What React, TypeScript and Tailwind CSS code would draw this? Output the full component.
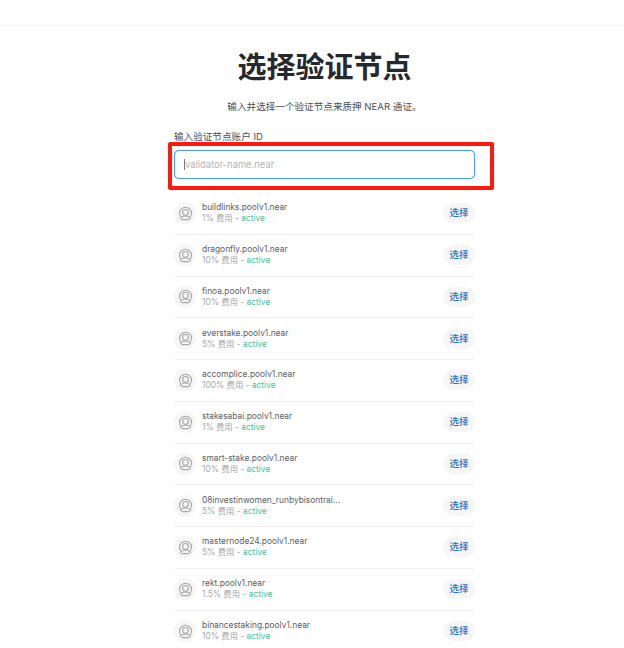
import { useEffect, useRef } from "react";

const validators = [
  { name: "buildlinks.poolv1.near", fee: "1%" },
  { name: "dragonfly.poolv1.near", fee: "10%" },
  { name: "finoa.poolv1.near", fee: "10%" },
  { name: "everstake.poolv1.near", fee: "5%" },
  { name: "accomplice.poolv1.near", fee: "100%" },
  { name: "stakesabai.poolv1.near", fee: "1%" },
  { name: "smart-stake.poolv1.near", fee: "10%" },
  { name: "08investinwomen_runbybisontrai...", fee: "5%" },
  { name: "masternode24.poolv1.near", fee: "5%" },
  { name: "rekt.poolv1.near", fee: "1.5%" },
  { name: "binancestaking.poolv1.near", fee: "10%" },
];

function AvatarIcon() {
  return (
    <div className="flex h-[22px] w-[22px] shrink-0 items-center justify-center rounded-full bg-[#f6f6f6]">
      <svg width="15" height="15" viewBox="0 0 15 15" fill="none" stroke="#a6a6a6" strokeWidth="1.1" strokeLinecap="round">
        <path d="M3 11.2A6 6 0 1 1 12 11.2" />
        <circle cx="7.5" cy="6.4" r="2.9" />
        <path d="M2.4 12.6c1.2-1.8 3-2.6 5.1-2.6s3.9.8 5.1 2.6" />
        <path d="M4 13.6h7" />
      </svg>
    </div>
  );
}

function ValidatorRow({ name, fee, last }: { name: string; fee: string; last: boolean }) {
  return (
    <div className={`flex h-[41.75px] items-center gap-[6px] ${last ? "" : "border-b border-[#f2f2f2]"}`}>
      <AvatarIcon />
      <div className="min-w-0 flex-1">
        <div className="truncate text-[8.4px] leading-[11px] text-[#5b6066]">{name}</div>
        <div className="text-[8.4px] leading-[11px] text-[#a8a8a8]">
          {fee} 费用 - <span className="text-[#4cc196]">active</span>
        </div>
      </div>
      <button className="h-[20px] w-[32px] shrink-0 rounded-full bg-[#f6f6f6] text-[9.5px] font-medium text-[#1f6fc4]">
        选择
      </button>
    </div>
  );
}

export default function App() {
  const inputRef = useRef<HTMLInputElement>(null);

  useEffect(() => {
    inputRef.current?.focus();
  }, []);

  return (
    <div className="relative h-[648px] w-[624px] overflow-hidden bg-white font-['Inter','Noto_Sans_CJK_SC',sans-serif]">
      <div className="h-[26px] border-b border-[#f3f3f3]" />

      <div className="ml-[174px] w-[301px]">
        <h1 className="mt-[20px] text-center text-[29px] leading-[44px] font-bold text-[#25292e]">选择验证节点</h1>
        <p className="mt-[10px] text-center text-[9.6px] leading-[14px] text-[#4a4f55]">输入并选择一个验证节点来质押 NEAR 通证。</p>

        <label className="mt-[16px] block text-[9.6px] leading-[14px] text-[#4a4f55]">输入验证节点账户 ID</label>
        <div className="relative mt-[6px]">
          <input
            ref={inputRef}
            placeholder="validator-name.near"
            className="block h-[29px] w-full rounded-[5px] border-[1.5px] border-[#4c9fe6] bg-white px-[10px] text-[9.4px] text-[#555] caret-transparent shadow-[0_0_1px_#4c9fe6] outline-none placeholder:text-[#b4b4b4]"
          />
          {/* blinking caret frozen in the screenshot */}
          <span className="absolute top-[9px] left-[10px] h-[11px] w-px bg-[#777]" />
        </div>

        <div className="mt-[14px]">
          {validators.map((v, i) => (
            <ValidatorRow key={v.name} name={v.name} fee={v.fee} last={i === validators.length - 1} />
          ))}
        </div>
      </div>

      {/* annotation drawn over the screenshot */}
      <div className="absolute top-[142px] left-[168px] h-[48px] w-[326px] rounded-[2px] border-[4px] border-[#ff1a0f]" />
    </div>
  );
}
